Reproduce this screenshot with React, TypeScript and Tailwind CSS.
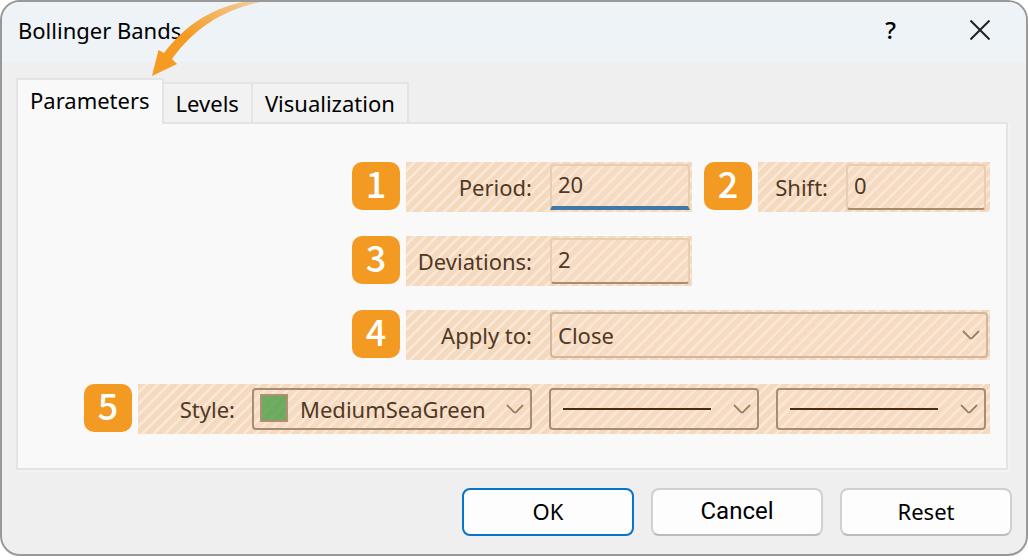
import { ReactNode, useState } from "react";

const tabs = ["Parameters", "Levels", "Visualization"]

type ChildrenProps = {
  children: ReactNode
}

function Badge({ children }: ChildrenProps) {
  return (
    <span className="flex size-12 shrink-0 items-center justify-center rounded-[10px] bg-[#f39a23] pb-2 font-['Noto_Sans_CJK_JP',sans-serif] text-4xl leading-none font-medium text-white">
      {children}
    </span>
  )
}

function Chevron() {
  return (
    <svg viewBox="0 0 18 10" className="pointer-events-none absolute top-1/2 right-2 h-2.5 w-[18px] -translate-y-1/2" fill="none" stroke="#97805f" strokeWidth="1.8">
      <path d="M1 1 L7.5 7.7 Q9 9 10.5 7.7 L17 1" />
    </svg>
  )
}

// Orange highlight with diagonal stripes showing through the controls
function Highlight({ children, className }: ChildrenProps & { className: string }) {
  return (
    <div className={`flex h-[50px] items-center justify-end bg-[#f4d9be] bg-[repeating-linear-gradient(135deg,transparent_0px,transparent_4px,rgba(255,255,255,0.42)_6px,rgba(255,255,255,0.42)_7px,transparent_8px)] text-[#503823] ${className}`}>
      {children}
    </div>
  )
}

type FieldProps = {
  id: string
  label: string
  initial: string
  active?: boolean
}

function Field({ id, label, initial, active = false }: FieldProps) {
  const [value, setValue] = useState(initial)

  return (
    <>
      <label htmlFor={id} className="mr-[18px]">{label}</label>
      <input
        id={id}
        value={value}
        onChange={(e) => setValue(e.target.value)}
        className={`h-[46px] w-[140px] rounded-sm border-2 border-[#e8cdb3] bg-[#ffe8d0]/20 px-1.5 pb-1 outline-none ${active ? "rounded-b-none border-b-4 border-b-[#4079a8]" : "border-b-[#a88d72]"}`}
      />
    </>
  )
}

function LineSelect({ label }: { label: string }) {
  return (
    <div className="relative w-[210px]">
      <select aria-label={label} className="block h-[42px] w-full appearance-none rounded-sm border-2 border-[#a88d75] bg-[#ffe8d0]/20 outline-none">
        <option></option>
      </select>
      <div className="pointer-events-none absolute top-5 right-12 left-3.5 h-0.5 bg-[#4a2c0e]" />
      <Chevron />
    </div>
  )
}

export default function App() {

  const [tab, setTab] = useState("Parameters")

  return (
    <main className="relative overflow-hidden rounded-[20px] border-2 border-[#999] bg-[#efefef] font-['Noto_Sans',sans-serif] text-[22px] leading-7 text-black">

      <header className="flex h-[60px] items-center justify-between bg-[#edf3f6] pr-9 pb-1 pl-4">
        <h1>Bollinger Bands</h1>
        <div className="flex items-center gap-[74px]">
          <button aria-label="Help" className="text-2xl leading-7 font-medium">?</button>
          <button aria-label="Close">
            <svg viewBox="0 0 20 20" className="size-5" stroke="#222" strokeWidth="2">
              <path d="M0.5 0.5 L19.5 19.5 M19.5 0.5 L0.5 19.5" />
            </svg>
          </button>
        </div>
      </header>

      <svg viewBox="0 0 130 80" className="pointer-events-none absolute -top-0.5 left-[148px] h-20 w-[130px]">
        <defs>
          <linearGradient id="arrow" x1="0" y1="1" x2="1" y2="0">
            <stop offset="0.4" stopColor="#f59a22" />
            <stop offset="1" stopColor="#f59a22" stopOpacity="0.3" />
          </linearGradient>
        </defs>
        <path d="M2 76 L8.5 50 L14 53 C37 23 66 4 112 -1 L128 -1 C82 5 48 23 22 59 L27 64 Z" fill="url(#arrow)" />
      </svg>

      <div className="px-3.5 pt-4 pb-[18px]">

        <nav className="flex items-end">
          {tabs.map((name) => (
            <button
              key={name}
              onClick={() => setTab(name)}
              className={tab === name
                ? "relative -mb-0.5 h-[46px] border-2 border-b-0 border-[#e4e4e4] bg-[#f9f9f9] px-3 pb-1"
                : "-mb-0.5 -ml-0.5 h-[42px] border-2 border-[#e4e4e4] bg-[#f2f2f2] px-3"}
            >
              {name}
            </button>
          ))}
        </nav>

        <section className="mr-1 flex flex-col items-end gap-6 border-2 border-[#e4e4e4] bg-[#f9f9f9] pt-[38px] pr-4 pb-[34px] shadow-[2px_2px_0_#f3f3f3]">

          <div className="flex w-[638px] items-start gap-1.5">
            <Badge>1</Badge>
            <Highlight className="w-[286px] pr-0.5">
              <Field id="period" label="Period:" initial="20" active />
            </Highlight>
            <div className="ml-1.5 flex grow items-start gap-1.5">
              <Badge>2</Badge>
              <Highlight className="grow pr-1">
                <Field id="shift" label="Shift:" initial="0" />
              </Highlight>
            </div>
          </div>

          <div className="flex w-[638px] items-start gap-1.5">
            <Badge>3</Badge>
            <Highlight className="w-[286px] pr-0.5">
              <Field id="deviations" label="Deviations:" initial="2" />
            </Highlight>
          </div>

          <div className="flex w-[638px] items-start gap-1.5">
            <Badge>4</Badge>
            <Highlight className="grow pr-0.5">
              <label htmlFor="apply" className="mr-[18px]">Apply to:</label>
              <div className="relative w-[438px]">
                <select id="apply" className="block h-[46px] w-full appearance-none rounded-sm border-2 border-[#d3b69b] bg-[#ffe8d0]/20 px-1.5 outline-none">
                  <option>Close</option>
                </select>
                <Chevron />
              </div>
            </Highlight>
          </div>

          <div className="flex w-[906px] items-start gap-1.5">
            <Badge>5</Badge>
            <Highlight className="grow gap-[17px] pr-1">
              <label htmlFor="style">Style:</label>
              <div className="relative w-[280px]">
                <select id="style" className="block h-[42px] w-full appearance-none rounded-sm border-2 border-[#a88d75] bg-[#ffe8d0]/20 pl-[46px] outline-none">
                  <option>MediumSeaGreen</option>
                </select>
                <div className="pointer-events-none absolute top-1.5 left-2 size-7 border-2 border-[#b09070] bg-[#3f9a3f]/75" />
                <Chevron />
              </div>
              <LineSelect label="Line style" />
              <LineSelect label="Line width" />
            </Highlight>
          </div>

        </section>

        <div className="mt-[18px] flex justify-end gap-[17px]">
          <button className="h-12 w-[172px] rounded-lg border-2 border-[#0873c9] bg-[#fdfdfd] pb-0.5">OK</button>
          <button className="h-12 w-[172px] rounded-lg border-2 border-[#d0d0d0] border-b-[#bbb] bg-[#fdfdfd] pb-0.5 font-[Roboto,sans-serif] text-2xl">Cancel</button>
          <button className="h-12 w-[172px] rounded-lg border-2 border-[#d0d0d0] border-b-[#bbb] bg-[#fdfdfd] pb-0.5">Reset</button>
        </div>

      </div>

    </main>
  )
}
